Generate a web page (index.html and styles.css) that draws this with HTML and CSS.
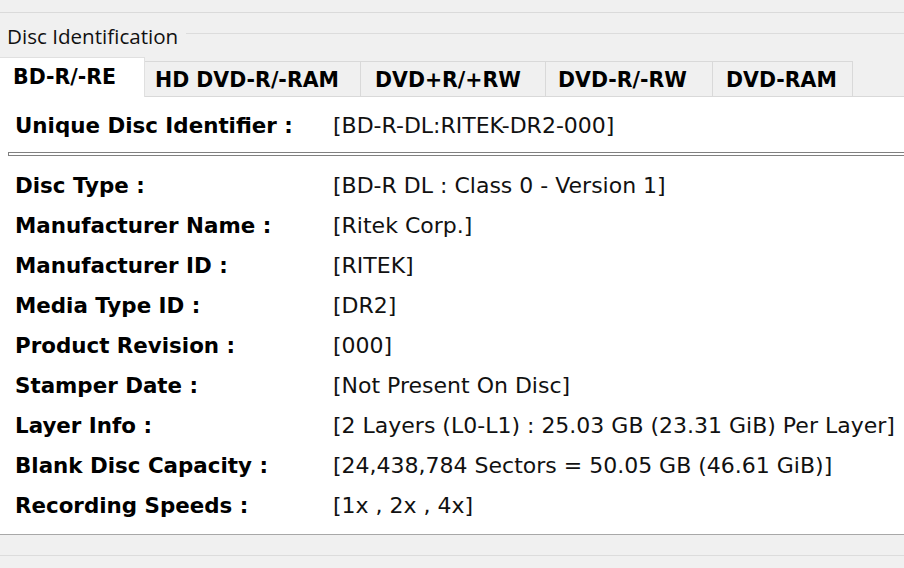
FILE: index.html
```html
<!DOCTYPE html>
<html>
<head>
<meta charset="utf-8">
<link rel="stylesheet" href="styles.css">
</head>
<body>
<div class="topbar"></div>
<div class="group-title"><span class="title-text">Disc Identification</span><span class="title-line"></span></div>
<div class="tabs">
  <div class="tab active tab-bd">BD-R/-RE</div>
  <div class="tab tab-hd">HD DVD-R/-RAM</div>
  <div class="tab tab-plus">DVD+R/+RW</div>
  <div class="tab tab-minus">DVD-R/-RW</div>
  <div class="tab tab-ram">DVD-RAM</div>
</div>
<div class="panel">
  <div class="row first"><span class="label">Unique Disc Identifier :</span><span class="value">[BD-R-DL:RITEK-DR2-000]</span></div>
  <div class="separator"></div>
  <div class="row"><span class="label">Disc Type :</span><span class="value">[BD-R DL : Class 0 - Version 1]</span></div>
  <div class="row"><span class="label">Manufacturer Name :</span><span class="value">[Ritek Corp.]</span></div>
  <div class="row"><span class="label">Manufacturer ID :</span><span class="value">[RITEK]</span></div>
  <div class="row"><span class="label">Media Type ID :</span><span class="value">[DR2]</span></div>
  <div class="row"><span class="label">Product Revision :</span><span class="value">[000]</span></div>
  <div class="row"><span class="label">Stamper Date :</span><span class="value">[Not Present On Disc]</span></div>
  <div class="row"><span class="label">Layer Info :</span><span class="value">[2 Layers (L0-L1) : 25.03 GB (23.31 GiB) Per Layer]</span></div>
  <div class="row"><span class="label">Blank Disc Capacity :</span><span class="value">[24,438,784 Sectors = 50.05 GB (46.61 GiB)]</span></div>
  <div class="row"><span class="label">Recording Speeds :</span><span class="value">[1x , 2x , 4x]</span></div>
</div>
<div class="footer"></div>
</body>
</html>
```
FILE: styles.css
```css
html, body {
  margin: 0;
  padding: 0;
}
body {
  background: #f0f0f0;
  width: 904px;
  height: 568px;
  overflow: hidden;
  font-family: "DejaVu Sans", sans-serif;
  color: #000;
}
.topbar {
  height: 12px;
  border-bottom: 1px solid #dadada;
}
.group-title {
  height: 44px;
  display: flex;
  align-items: center;
}
.title-text {
  font-family: "Open Sans", sans-serif;
  font-size: 20.6px;
  padding-left: 7px;
  padding-right: 8px;
  color: #111;
  line-height: 44px;
  margin-top: 1px;
}
.title-line {
  flex: 1;
  height: 0;
  border-top: 1px solid #dcdcdc;
  margin-top: -3px;
}
.tabs {
  display: flex;
  align-items: flex-end;
  height: 39px;
  border-bottom: 1px solid #d9d9d9;
}
.tab {
  box-sizing: border-box;
  height: 35px;
  border: 1px solid #d9d9d9;
  border-bottom: none;
  border-left: none;
  background: #f0f0f0;
  font-family: "DejaVu Sans", sans-serif;
  font-weight: bold;
  font-size: 20.5px;
  padding-left: 12px;
  line-height: 36px;
  white-space: nowrap;
}
.tab.active {
  height: 40px;
  margin-bottom: -1px;
  background: #fff;
  line-height: 38px;
  border-color: #e0e0e0;
}
.tab-bd { width: 145px; padding-left: 13px; }
.tab-hd { width: 216px; padding-left: 10px; }
.tab-plus { width: 185px; padding-left: 14px; }
.tab-minus { width: 167px; padding-left: 12px; }
.tab-ram { width: 140px; padding-left: 13px; }
.panel {
  background: #fff;
  height: 438px;
  box-sizing: border-box;
  padding-top: 8px;
  border-bottom: 1px solid #a8a8a8;
}
.row {
  display: flex;
  height: 40px;
  align-items: center;
  padding-left: 15px;
}
.label {
  width: 318px;
  flex: none;
  font-family: "DejaVu Sans", sans-serif;
  font-weight: bold;
  font-size: 21.4px;
}
.value {
  font-family: "DejaVu Sans", sans-serif;
  font-size: 22px;
  color: #111;
  white-space: nowrap;
}
.separator {
  margin: 7px 0 9px 8px;
  height: 2px;
  border-top: 1px solid #808080;
  border-bottom: 1px solid #808080;
  border-left: 1px solid #808080;
}
.footer {
  height: 20px;
  border-bottom: 1px solid #dcdcdc;
}
```
